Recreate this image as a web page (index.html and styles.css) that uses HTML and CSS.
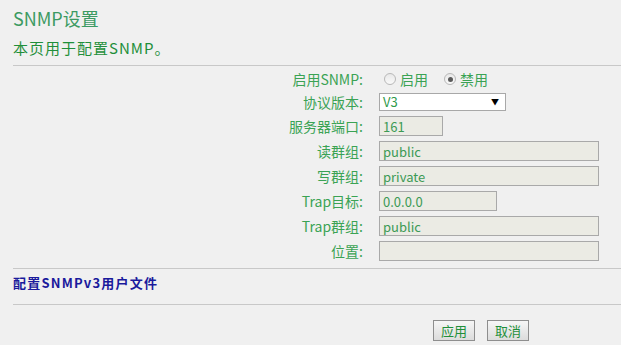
FILE: index.html
```html
<!DOCTYPE html>
<html lang="zh-CN">
<head>
    <meta charset="UTF-8">
    <title>SNMP设置</title>
    <link rel="stylesheet" href="styles.css">
</head>
<body>
    <div id="page">
        <h1 class="title">SNMP设置</h1>
        <p class="desc">本页用于配置SNMP。</p>
        <div class="divider"></div>
        <div class="form">
            <label class="label first">启用SNMP:</label>
            <div class="field first radios">
                <span class="radio"><span class="dot"></span>启用</span>
                <span class="radio checked"><span class="dot"></span>禁用</span>
            </div>
            <label class="label first">协议版本:</label>
            <div class="field first">
                <div class="select"><span>V3</span><span class="arrow">▼</span></div>
            </div>
            <label class="label">服务器端口:</label>
            <div class="field"><input class="input short" value="161" disabled></div>
            <label class="label">读群组:</label>
            <div class="field"><input class="input long" value="public" disabled></div>
            <label class="label">写群组:</label>
            <div class="field"><input class="input long" value="private" disabled></div>
            <label class="label">Trap目标:</label>
            <div class="field"><input class="input mid" value="0.0.0.0" disabled></div>
            <label class="label">Trap群组:</label>
            <div class="field"><input class="input long" value="public" disabled></div>
            <label class="label">位置:</label>
            <div class="field"><input class="input long" value="" disabled></div>
        </div>
        <div class="divider"></div>
        <a class="v3link" href="#">配置SNMPv3用户文件</a>
        <div class="divider"></div>
        <div class="buttons">
            <button class="btn">应用</button>
            <button class="btn">取消</button>
        </div>
    </div>
</body>
</html>
```

FILE: styles.css
```css
body {
    margin: 0;
    background: #f0f0f0;
    font-family: "Noto Sans CJK SC", "Noto Sans", sans-serif;
    color: #3aa354;
    overflow: hidden;
}
#page {
    padding: 6px 0 0 13px;
}
.title {
    margin: 0;
    font-size: 18px;
    font-weight: normal;
    line-height: 24px;
    color: #3c9a62;
}
.desc {
    margin: 8px 0 7px 0;
    font-size: 15px;
    letter-spacing: 1px;
    line-height: 20px;
    color: #1f8f3a;
}
.divider {
    height: 1px;
    background: #c8c8c8;
}
.form {
    display: grid;
    grid-template-columns: 350px 1fr;
    column-gap: 16px;
    row-gap: 5px;
    padding: 4px 0 7px 0;
}
.label {
    text-align: right;
    font-size: 14px;
    line-height: 20px;
    height: 20px;
}
.field {
    display: flex;
    align-items: center;
    height: 20px;
}
.label.first,
.field.first {
    height: 18px;
    line-height: 18px;
}
.radios {
    gap: 16px;
    font-size: 14px;
    padding-left: 5px;
}
.radio {
    display: flex;
    align-items: center;
    gap: 4px;
}
.dot {
    width: 12px;
    height: 12px;
    border: 1px solid #b8b8b8;
    border-radius: 50%;
    background: linear-gradient(#e8e8e8, #fafafa);
    box-sizing: border-box;
    position: relative;
}
.checked .dot::after {
    content: "";
    position: absolute;
    left: 2.5px;
    top: 2.5px;
    width: 5px;
    height: 5px;
    border-radius: 50%;
    background: #5a5a5a;
}
.select {
    width: 127px;
    height: 18px;
    box-sizing: border-box;
    border: 1px solid #a8a8a8;
    background: #fff;
    display: flex;
    justify-content: space-between;
    align-items: center;
    padding: 0 6px 0 3px;
    font-size: 13px;
    color: #2f9a4a;
}
.arrow {
    font-size: 8px;
    color: #000;
}
.input {
    height: 20px;
    box-sizing: border-box;
    border: 1px solid #a9a9a9;
    background: #ebebe4;
    color: #3c9a55;
    font-family: "Noto Sans CJK SC", "Noto Sans", sans-serif;
    font-size: 13px;
    padding: 0 3px;
    margin: 0;
}
.short { width: 64px; }
.mid { width: 118px; }
.long { width: 220px; }
.v3link {
    display: block;
    font-size: 13px;
    font-weight: bold;
    color: #1a1a9c;
    text-decoration: none;
    line-height: 16px;
    padding: 6px 0 13px 0;
    letter-spacing: 1.2px;
}
.buttons {
    display: flex;
    gap: 12px;
    padding: 15px 0 0 420px;
}
.btn {
    width: 42px;
    height: 21px;
    padding: 0;
    border: 1px solid #8e8e8e;
    background: linear-gradient(#f6f6f6, #dcdcdc);
    color: #1f8f3a;
    font-family: "Noto Sans CJK SC", "Noto Sans", sans-serif;
    font-size: 13px;
    line-height: 19px;
}
```
